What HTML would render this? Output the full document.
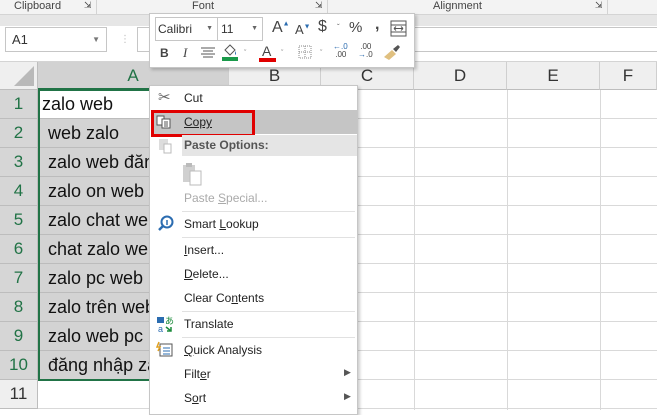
<!DOCTYPE html>
<html><head><meta charset="utf-8"><style>
*{margin:0;padding:0;box-sizing:border-box}
body{width:657px;height:410px;overflow:hidden;background:#fff;font-family:"Segoe UI","Liberation Sans","DejaVu Sans",sans-serif;position:relative}
.a{position:absolute}
.rib{left:0;top:0;width:657px;height:15px;background:#f3f3f3;border-bottom:1px solid #d4d4d4;font-size:11px;color:#444}
.band{left:0;top:15px;width:657px;height:11px;background:#e6e6e6}
.fb{left:0;top:26px;width:657px;height:36px;background:#fff;border-bottom:1px solid #d4d4d4}
.hdr{top:62px;height:28px;background:#efefef;border-right:1px solid #cfcfcf;border-bottom:1px solid #bdbdbd;text-align:center;font-size:17px;line-height:28px;color:#333}
.rh{left:0;width:38px;height:29px;background:#d6d6d6;border-bottom:1px solid #bdbdbd;border-right:1px solid #bdbdbd;text-align:center;font-size:17px;line-height:28px;color:#217346}
.cell{left:38px;width:191px;height:29px;background:#d3d3d3;border-bottom:1px solid #bcbcbc;font-size:18px;line-height:28px;padding-left:10px;color:#111;white-space:nowrap;overflow:hidden}
.gl{height:1px;background:#d9d9d9}
.vl{width:1px;background:#d9d9d9}
.menu{left:149px;top:85px;width:209px;height:330px;background:#fff;border:1px solid #c6c6c6;box-shadow:2px 2px 3px rgba(0,0,0,.2);font-size:12px;color:#222}
.mi{position:absolute;left:34px;font-size:12px}
.sep{position:absolute;left:32px;right:2px;height:1px;background:#e1e1e1}
.tb{left:149px;top:13px;width:266px;height:55px;background:#fff;border:1px solid #c6c6c6;box-shadow:2px 2px 3px rgba(0,0,0,.2)}
.u{text-decoration:underline}
</style></head><body>
<div class="a rib"><span class="a" style="left:14px;top:0">Clipboard</span><span class="a" style="left:84px;top:0;font-size:9px">&#8690;</span><span class="a" style="left:96px;top:0;width:1px;height:15px;background:#d4d4d4"></span><span class="a" style="left:192px;top:0">Font</span><span class="a" style="left:315px;top:0;font-size:9px">&#8690;</span><span class="a" style="left:327px;top:0;width:1px;height:15px;background:#d4d4d4"></span><span class="a" style="left:433px;top:0">Alignment</span><span class="a" style="left:595px;top:0;font-size:9px">&#8690;</span><span class="a" style="left:607px;top:0;width:1px;height:15px;background:#d4d4d4"></span></div>
<div class="a band"></div>
<div class="a fb"><div class="a" style="left:5px;top:1px;width:102px;height:25px;border:1px solid #c6c6c6;font-size:13px;line-height:23px;padding-left:6px;color:#333">A1<span class="a" style="right:6px;top:0;font-size:8px;color:#777">&#9660;</span></div><span class="a" style="left:120px;top:8px;color:#bbb;font-size:10px">&#8942;</span><div class="a" style="left:137px;top:1px;width:530px;height:25px;border:1px solid #c6c6c6"></div></div>
<div class="a" style="left:0;top:62px;width:38px;height:28px;background:#efefef;border-right:1px solid #bdbdbd;border-bottom:1px solid #bdbdbd"><div class="a" style="right:3px;bottom:3px;width:0;height:0;border-left:20px solid transparent;border-bottom:20px solid #b9b9b9"></div></div>
<div class="a hdr" style="left:38px;width:191px;background:#d2d2d2;color:#217346;border-bottom:2px solid #217346">A</div>
<div class="a hdr" style="left:229px;width:92px">B</div>
<div class="a hdr" style="left:321px;width:93px">C</div>
<div class="a hdr" style="left:414px;width:93px">D</div>
<div class="a hdr" style="left:507px;width:93px">E</div>
<div class="a hdr" style="left:600px;width:57px">F</div>
<div class="a rh" style="top:90px">1</div><div class="a cell" style="top:90px;background:#fff;padding-left:4px">zalo web</div>
<div class="a rh" style="top:119px">2</div><div class="a cell" style="top:119px">web zalo</div>
<div class="a rh" style="top:148px">3</div><div class="a cell" style="top:148px">zalo web đăng nhập</div>
<div class="a rh" style="top:177px">4</div><div class="a cell" style="top:177px">zalo on web</div>
<div class="a rh" style="top:206px">5</div><div class="a cell" style="top:206px">zalo chat web</div>
<div class="a rh" style="top:235px">6</div><div class="a cell" style="top:235px">chat zalo web</div>
<div class="a rh" style="top:264px">7</div><div class="a cell" style="top:264px">zalo pc web</div>
<div class="a rh" style="top:293px">8</div><div class="a cell" style="top:293px">zalo trên web</div>
<div class="a rh" style="top:322px">9</div><div class="a cell" style="top:322px">zalo web pc</div>
<div class="a rh" style="top:351px">10</div><div class="a cell" style="top:351px">đăng nhập zalo web</div>
<div class="a rh" style="top:380px;background:#efefef;color:#333">11</div>
<div class="a" style="left:38px;top:89px;width:192px;height:292px;border:2px solid #217346"></div>
<div class="a vl" style="left:321px;top:90px;height:320px"></div>
<div class="a vl" style="left:414px;top:90px;height:320px"></div>
<div class="a vl" style="left:507px;top:90px;height:320px"></div>
<div class="a vl" style="left:600px;top:90px;height:320px"></div>
<div class="a gl" style="left:357px;top:118px;width:300px"></div>
<div class="a gl" style="left:357px;top:147px;width:300px"></div>
<div class="a gl" style="left:357px;top:176px;width:300px"></div>
<div class="a gl" style="left:357px;top:205px;width:300px"></div>
<div class="a gl" style="left:357px;top:234px;width:300px"></div>
<div class="a gl" style="left:357px;top:263px;width:300px"></div>
<div class="a gl" style="left:357px;top:292px;width:300px"></div>
<div class="a gl" style="left:357px;top:321px;width:300px"></div>
<div class="a gl" style="left:357px;top:350px;width:300px"></div>
<div class="a gl" style="left:357px;top:379px;width:300px"></div>
<div class="a gl" style="left:38px;top:408px;width:619px"></div>
<div class="a menu">
<span class="a" style="left:8px;top:2px;font-size:15px;color:#666">&#9986;</span>
<div class="mi" style="top:5px">Cut</div>
<div class="a" style="left:1px;top:24px;width:206px;height:24px;background:#c5c5c5"></div>
<svg class="a" style="left:6px;top:29px" width="16" height="14"><rect x="1" y="1" width="7" height="9" fill="#fff" stroke="#555"/><rect x="6" y="4" width="8" height="9" fill="#fff" stroke="#555"/><path d="M8 7h4M8 9h4M8 11h4" stroke="#555"/></svg>
<div class="mi u" style="top:29px">Copy</div>
<div class="a" style="left:1px;top:24px;width:104px;height:27px;border:3px solid #e00000"></div>
<div class="a" style="left:32px;top:49px;width:175px;height:21px;background:#e5e5e5"></div>
<svg class="a" style="left:8px;top:52px" width="16" height="16"><rect x="1" y="1" width="9" height="11" fill="#ddd"/><rect x="6" y="6" width="7" height="9" fill="#fff" stroke="#bbb"/></svg>
<div class="mi" style="top:52px;font-weight:bold;color:#555">Paste Options:</div>
<svg class="a" style="left:32px;top:76px" width="22" height="24"><rect x="1" y="3" width="12" height="17" fill="#d0d0d0"/><rect x="4" y="1" width="6" height="4" fill="#bbb"/><rect x="8" y="9" width="11" height="14" fill="#fff" stroke="#bbb"/></svg>
<div class="mi" style="top:105px;color:#aaa">Paste <span class="u">S</span>pecial...</div>
<div class="sep" style="top:125px"></div>
<svg class="a" style="left:8px;top:129px" width="16" height="16"><circle cx="9" cy="7" r="5.5" fill="none" stroke="#2b6cb0" stroke-width="2"/><path d="M5 11L1 15" stroke="#2b6cb0" stroke-width="2.5"/><path d="M9 5v5" stroke="#2b6cb0" stroke-width="1.5"/></svg>
<div class="mi" style="top:131px">Smart <span class="u">L</span>ookup</div>
<div class="sep" style="top:151px"></div>
<div class="mi" style="top:157px"><span class="u">I</span>nsert...</div>
<div class="mi" style="top:181px"><span class="u">D</span>elete...</div>
<div class="mi" style="top:205px">Clear Co<span class="u">n</span>tents</div>
<div class="sep" style="top:225px"></div>
<svg class="a" style="left:6px;top:229px" width="18" height="18"><rect x="1" y="2" width="7" height="6" fill="#2b6cb0"/><text x="2" y="17" font-size="9" fill="#2b6cb0" font-family="Liberation Sans">a</text><text x="9" y="9" font-size="9" fill="#1a8a3a" font-family="Noto Sans CJK JP">あ</text><path d="M10 12l5 4M15 12v4h-4" stroke="#1a8a3a" stroke-width="1.5" fill="none"/></svg>
<div class="mi" style="top:231px">Translate</div>
<div class="sep" style="top:251px"></div>
<svg class="a" style="left:6px;top:255px" width="18" height="16"><rect x="4" y="3" width="12" height="12" fill="#fff" stroke="#555"/><path d="M7 7h7M7 10h7M7 13h7" stroke="#2b6cb0"/><path d="M3 1l-2 5h3l-2 4" stroke="#e0a020" stroke-width="1.5" fill="none"/></svg>
<div class="mi" style="top:257px"><span class="u">Q</span>uick Analysis</div>
<div class="mi" style="top:281px">Filt<span class="u">e</span>r</div>
<span class="a" style="left:194px;top:281px;font-size:9px;color:#555">&#9654;</span>
<div class="mi" style="top:305px">S<span class="u">o</span>rt</div>
<span class="a" style="left:194px;top:305px;font-size:9px;color:#555">&#9654;</span>
</div>
<div class="a tb">
<div class="a" style="left:5px;top:3px;width:63px;height:24px;border:1px solid #c6c6c6;font-size:12px;line-height:22px;padding-left:2px;color:#333">Calibri<span class="a" style="right:4px;top:0;font-size:7px;color:#666">&#9660;</span></div>
<div class="a" style="left:67px;top:3px;width:46px;height:24px;border:1px solid #c6c6c6;font-size:12px;line-height:22px;padding-left:3px;color:#333">11<span class="a" style="right:4px;top:0;font-size:7px;color:#666">&#9660;</span></div>
<span class="a" style="left:122px;top:5px;font-size:16px;color:#444">A<sup style="font-size:7px;color:#2b6cb0">&#9650;</sup></span>
<span class="a" style="left:145px;top:8px;font-size:13px;color:#444">A<sup style="font-size:7px;color:#2b6cb0">&#9660;</sup></span>
<span class="a" style="left:168px;top:4px;font-size:16px;color:#444">$</span>
<span class="a" style="left:187px;top:9px;font-size:8px;color:#666">&#711;</span>
<span class="a" style="left:199px;top:5px;font-size:15px;color:#444">%</span>
<span class="a" style="left:225px;top:2px;font-size:16px;font-weight:bold;color:#444">,</span>
<svg class="a" style="left:240px;top:6px" width="18" height="18"><rect x="1" y="1" width="15" height="15" fill="none" stroke="#555"/><path d="M1 5h15M1 12h15M4 8.5h9M4 8.5l2-2M4 8.5l2 2M13 8.5l-2-2M13 8.5l-2 2" stroke="#555" fill="none"/></svg>
<span class="a" style="left:10px;top:32px;font-size:12px;font-weight:bold;color:#444">B</span>
<span class="a" style="left:33px;top:31px;font-size:13px;font-style:italic;font-family:'Liberation Serif',serif;color:#444">I</span>
<svg class="a" style="left:50px;top:33px" width="16" height="12"><path d="M1 1h14M3 4h10M1 7h14M3 10h10" stroke="#555"/></svg>
<svg class="a" style="left:71px;top:29px" width="18" height="18"><path d="M4 7l5-5 5 5-5 5z" fill="#fff" stroke="#555"/><path d="M14 8q2 3 0 4" fill="#2b6cb0"/><rect x="1" y="14" width="16" height="4" fill="#1a9a4a"/></svg>
<span class="a" style="left:94px;top:36px;font-size:7px;color:#666">&#711;</span>
<span class="a" style="left:112px;top:29px;font-size:14px;color:#444">A</span>
<div class="a" style="left:109px;top:44px;width:17px;height:4px;background:#e00000"></div>
<span class="a" style="left:131px;top:36px;font-size:7px;color:#666">&#711;</span>
<svg class="a" style="left:148px;top:31px" width="15" height="15"><rect x="1" y="1" width="12" height="12" fill="none" stroke="#888" stroke-dasharray="1 1"/><path d="M7 1v12M1 7h12" stroke="#888" stroke-dasharray="1 1"/></svg>
<span class="a" style="left:170px;top:36px;font-size:7px;color:#666">&#711;</span>
<span class="a" style="left:183px;top:29px;font-size:8px;line-height:8px;color:#2b6cb0">&larr;.0<br><span style="color:#444">&nbsp;.00</span></span>
<span class="a" style="left:208px;top:29px;font-size:8px;line-height:8px;color:#444">&nbsp;.00<br><span style="color:#2b6cb0">&rarr;</span>.0</span>
<svg class="a" style="left:232px;top:29px" width="20" height="18"><path d="M2 14l8-7 4 4-7 6z" fill="#e0c080"/><path d="M11 6l5-4 2 2-4 5z" fill="#555"/></svg>
</div>
</body></html>
